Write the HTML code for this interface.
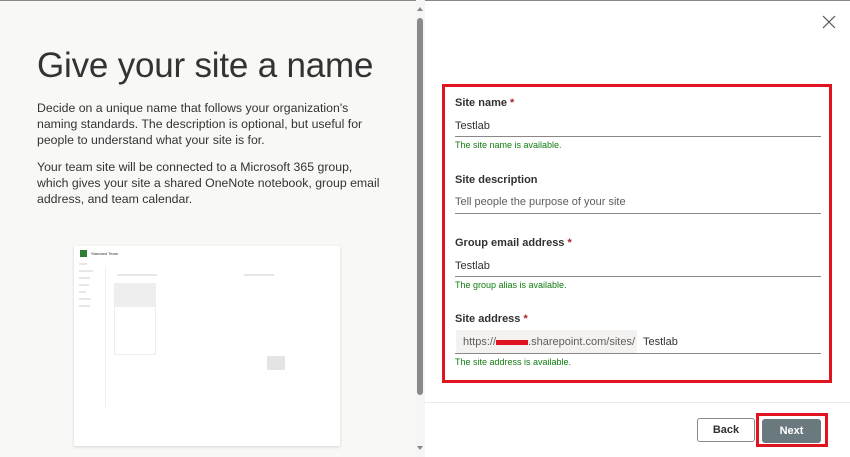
<!DOCTYPE html>
<html><head><meta charset="utf-8"><style>
*{margin:0;padding:0;box-sizing:border-box}
body{width:850px;height:457px;overflow:hidden;font-family:"Liberation Sans",sans-serif;background:#fff;position:relative}
.left{position:absolute;left:0;top:0;width:416px;height:457px;background:#f8f8f6}
.topbar{position:absolute;left:0;top:0;width:850px;height:1px;background:#888}
h1{position:absolute;left:37px;top:46px;font-size:35px;font-weight:300;color:#333;letter-spacing:-0.2px;white-space:nowrap}
.p{position:absolute;left:37px;font-size:12.3px;line-height:16px;color:#333;width:346px}
.card{position:absolute;left:74px;top:246px;width:266px;height:200px;background:#fff;box-shadow:0 1px 3px rgba(0,0,0,.15);border-radius:2px}
.sb{position:absolute;left:416px;top:0;width:9px;height:457px;background:#f5f5f5}
.thumb{position:absolute;left:417px;top:18px;width:6px;height:377px;background:#8a8a8a;border-radius:3px}
.redbox{position:absolute;left:442px;top:84px;width:390px;height:299px;border:3px solid #e0141e}
.lbl{position:absolute;left:455px;font-size:11px;font-weight:bold;color:#323130}
.lbl span{color:#a4262c}
.val{position:absolute;left:455px;font-size:11px;color:#323130}
.line{position:absolute;left:455px;width:366px;height:1px;background:#8a8886}
.ok{position:absolute;left:455px;font-size:9px;color:#107c10}
.btn{position:absolute;height:24px;border-radius:3px;font-size:11px;font-weight:bold;text-align:center;line-height:22px}
.t{position:absolute;font-size:3px;color:#999;background:#e6e6e6;height:2px}
</style></head><body>
<div class="left"></div>
<div class="topbar"></div>
<h1>Give your site a name</h1>
<div class="p" style="top:100px">Decide on a unique name that follows your organization's naming standards. The description is optional, but useful for people to understand what your site is for.</div>
<div class="p" style="top:159px">Your team site will be connected to a Microsoft 365 group, which gives your site a shared OneNote notebook, group email address, and team calendar.</div>
<div class="card">
 <div style="position:absolute;left:6px;top:4px;width:7px;height:7px;background:#2e7d32"></div>
 <div style="position:absolute;left:17px;top:5px;font-size:4px;color:#333">Standard Team</div>
 <div class="t" style="left:5px;top:17px;width:8px"></div>
 <div class="t" style="left:5px;top:24px;width:14px"></div>
 <div class="t" style="left:5px;top:31px;width:11px"></div>
 <div class="t" style="left:5px;top:38px;width:10px"></div>
 <div class="t" style="left:5px;top:45px;width:7px"></div>
 <div class="t" style="left:5px;top:52px;width:12px"></div>
 <div class="t" style="left:5px;top:59px;width:11px"></div>
 <div class="t" style="left:43px;top:28px;width:40px"></div>
 <div class="t" style="left:170px;top:28px;width:30px"></div>
 <div style="position:absolute;left:31px;top:21px;width:1px;height:140px;background:#f0f0f0"></div>
 <div style="position:absolute;left:40px;top:37px;width:42px;height:24px;background:#eee"></div>
 <div style="position:absolute;left:40px;top:37px;width:42px;height:72px;border:1px solid #eee"></div>
 <div style="position:absolute;left:193px;top:110px;width:18px;height:14px;background:#e4e4e4"></div>
</div>
<div class="sb"></div>
<div style="position:absolute;left:417px;top:7px;width:0;height:0;border-left:3px solid transparent;border-right:3px solid transparent;border-bottom:4px solid #888"></div>
<div class="thumb"></div>
<div style="position:absolute;left:417px;top:446px;width:0;height:0;border-left:3px solid transparent;border-right:3px solid transparent;border-top:4px solid #888"></div>
<svg style="position:absolute;left:822px;top:15px" width="14" height="14"><path d="M1 1L13 13M13 1L1 13" stroke="#555" stroke-width="1.2"/></svg>
<div class="redbox"></div>
<div class="lbl" style="top:97px">Site name <span>*</span></div>
<div class="val" style="top:120px">Testlab</div>
<div class="line" style="top:136px"></div>
<div class="ok" style="top:140px">The site name is available.</div>
<div class="lbl" style="top:174px">Site description</div>
<div class="val" style="top:196px;color:#605e5c">Tell people the purpose of your site</div>
<div class="line" style="top:213px"></div>
<div class="lbl" style="top:237px">Group email address <span>*</span></div>
<div class="val" style="top:260px">Testlab</div>
<div class="line" style="top:276px"></div>
<div class="ok" style="top:280px">The group alias is available.</div>
<div class="lbl" style="top:313px">Site address <span>*</span></div>
<div style="position:absolute;left:456px;top:330px;width:181px;height:23px;background:#f3f2f1"></div>
<div class="val" style="top:336px;left:463px;color:#605e5c">https://<span style="display:inline-block;width:32px;height:5px;background:#e0141e;vertical-align:middle"></span>.sharepoint.com/sites/</div>
<div class="val" style="top:336px;left:643px">Testlab</div>
<div class="line" style="top:353px"></div>
<div class="ok" style="top:357px">The site address is available.</div>
<div style="position:absolute;left:425px;top:402px;width:425px;height:1px;background:#edebe9"></div>
<div class="btn" style="left:697px;top:418px;width:58px;border:1px solid #8a8886;background:#fff;color:#323130">Back</div>
<div style="position:absolute;left:756px;top:413px;width:72px;height:34px;border:3px solid #e0141e"></div>
<div class="btn" style="left:762px;top:419px;width:59px;background:#69797e;color:#fff;line-height:24px">Next</div>
</body></html>
